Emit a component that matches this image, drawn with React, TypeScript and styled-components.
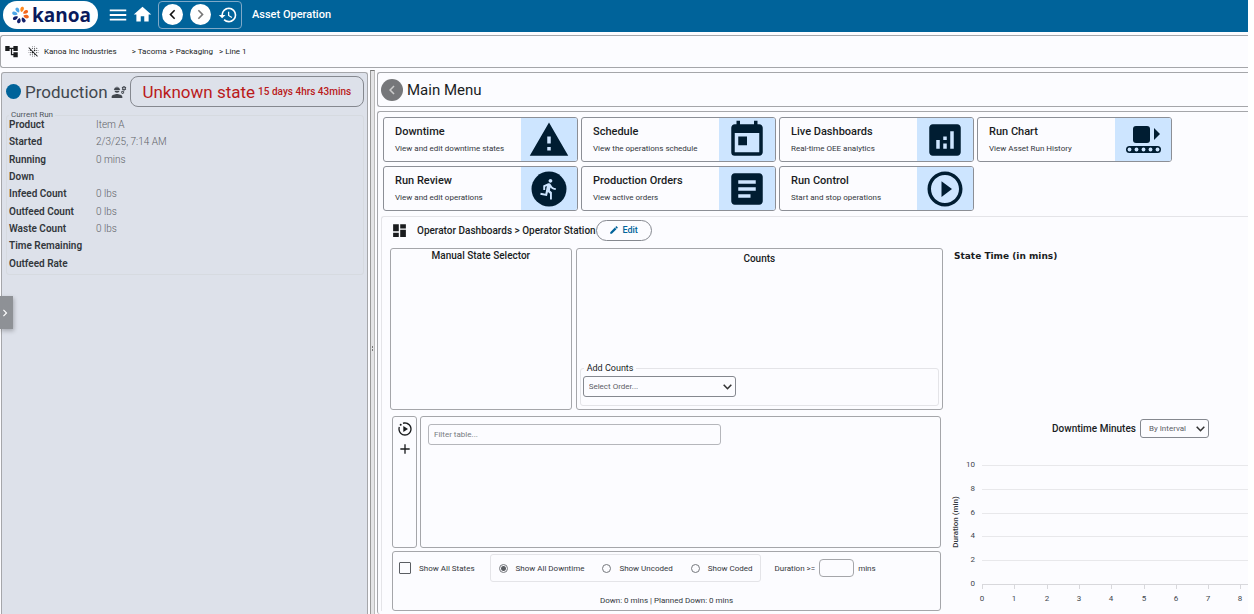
import React from "react";
import styled, { createGlobalStyle, css } from "styled-components";
import {
  MdAccountTree,
  MdAdd,
  MdAnalytics,
  MdArticle,
  MdBlurOff,
  MdChevronLeft,
  MdChevronRight,
  MdDashboard,
  MdEdit,
  MdEngineering,
  MdHistory,
  MdHome,
  MdMenu,
  MdPlayCircleOutline,
  MdToday,
  MdWarning,
} from "react-icons/md";

const color = {
  primary: "#00639a",
  surface: "#fcfcff",
  side: "#dde1ea",
  line: "#a5a6aa",
  faint: "#e4e4e8",
  ink: "#1a1c1e",
  muted: "#5f6369",
  accent: "#cde5ff",
  deep: "#001d32",
  danger: "#ba1a1a",
};

const GlobalStyle = createGlobalStyle`
  *, *::before, *::after { box-sizing: border-box; }
  html, body, #root { height: 100%; }
  body {
    margin: 0;
    background: #fff;
    color: ${color.ink};
    font-family: Roboto, "Liberation Sans", sans-serif;
    font-size: 8px;
    overflow: hidden;
  }
  button, input, select { font: inherit; color: inherit; }
  h1, h2, p { margin: 0; }
  svg { display: block; flex: none; }
`;

const Page = styled.div`
  display: flex;
  flex-direction: column;
  height: 100vh;
  margin-right: 6px;
  background: ${color.surface};
  overflow: hidden;
`;

const TopBar = styled.header`
  display: flex;
  align-items: center;
  flex: none;
  height: 32px;
  padding: 0 3px 3px;
  background: ${color.primary};
  color: #fff;
`;

const Brand = styled.a`
  display: flex;
  align-items: center;
  gap: 1px;
  width: 95px;
  height: 28px;
  padding-left: 7px;
  margin-right: 9px;
  border-radius: 14px;
  background: #fff;
  color: #0a1a5c;
  font: 700 19px/24px "Open Sans", sans-serif;
  text-decoration: none;
`;

const PlainButton = styled.button`
  display: flex;
  align-items: center;
  justify-content: center;
  padding: 0;
  border: 0;
  background: none;
  cursor: pointer;
`;

const BarButton = styled(PlainButton)`
  width: 22px;
  height: 22px;
  margin-right: 2px;
  color: #fff;
`;

const HistoryGroup = styled.div`
  display: flex;
  align-items: center;
  gap: 7px;
  height: 28px;
  padding: 0 3px;
  margin: 0 10px 0 3px;
  border: 1px solid #7fa9c8;
  border-radius: 4px;
`;

const RoundButton = styled(PlainButton)<{ $dim?: boolean }>`
  width: 21px;
  height: 21px;
  border-radius: 50%;
  background: #fff;
  color: ${(p) => (p.$dim ? "#777" : "#111")};
`;

const BarTitle = styled.h1`
  font-size: 11px;
  font-weight: 500;
`;

const Panel = styled.div`
  border: 1px solid ${color.line};
  border-radius: 3px;
`;

const Crumbs = styled.nav`
  display: flex;
  align-items: center;
  flex: none;
  height: 33px;
  margin-top: 3px;
  padding-left: 3px;
  border: 1px solid ${color.line};
  border-right: 0;
  border-radius: 3px 0 0 3px;
  a { color: inherit; text-decoration: none; }
`;

const CrumbIcons = styled.span`
  display: flex;
  align-items: center;
  gap: 8px;
  margin-right: 4px;
`;

const CrumbPath = styled.span`
  display: flex;
  gap: 3px;
  margin: 0 6px 0 15px;
`;

const Body = styled.div`
  display: flex;
  flex: 1;
  min-height: 0;
  padding-top: 4px;
`;

const Sidebar = styled.aside`
  position: relative;
  flex: 0 0 367px;
  margin-left: 1px;
  padding: 3px 3px 0 4px;
  border: 1px solid ${color.line};
  border-bottom: 0;
  border-radius: 3px 3px 0 0;
  background: ${color.side};
`;

const Splitter = styled.div`
  display: flex;
  align-items: center;
  flex: 0 0 5px;
  margin: -2px 2px 0;
  border-top: 1px solid #777;
  border-right: 1px solid #bbb;
  border-left: 1px solid #999;
  background: #e4e4e6;
`;

const Grip = styled.span`
  width: 1px;
  height: 5px;
  margin: 11px 0 0 1px;
  border-top: 2px solid #777;
  border-bottom: 2px solid #777;
`;

const Content = styled.main`
  display: flex;
  flex-direction: column;
  flex: 1;
  min-width: 0;
  gap: 4px;
`;

const StateRow = styled.div`
  display: flex;
  align-items: center;
  height: 31px;
`;

const Dot = styled.span`
  width: 15px;
  height: 15px;
  margin-right: 4px;
  border-radius: 50%;
  background: ${color.primary};
`;

const StateName = styled.h2`
  margin-right: 3px;
  color: #42474e;
  font-size: 17px;
  font-weight: 400;
`;

const StateBox = styled.div`
  display: flex;
  align-items: center;
  justify-content: center;
  flex: 1;
  gap: 3px;
  height: 31px;
  margin-left: 3px;
  border: 1px solid #85888f;
  border-radius: 8px;
  color: ${color.danger};
  font-size: 17px;
  small { font-size: 10px; font-weight: 500; }
`;

const RunSet = styled.fieldset`
  margin: 3px 0 0;
  padding: 0 0 2px 2px;
  border: 1px solid #d6dae0;
  border-radius: 3px;
  legend {
    height: 10px;
    padding: 0 2px;
    color: #50555c;
    font-size: 8px;
    line-height: 10px;
  }
`;

const RunTable = styled.table`
  height: 156px;
  margin-top: -4px;
  border-collapse: collapse;
  font-size: 10px;
  line-height: 15px;
  th {
    width: 87px;
    padding: 0;
    color: #33373c;
    font-weight: 600;
    text-align: left;
  }
  td { padding: 0; color: ${color.muted}; font-weight: 300; }
`;

const Drawer = styled(PlainButton)`
  position: absolute;
  top: 223px;
  left: -2px;
  width: 13px;
  height: 33px;
  padding-right: 3px;
  background: #8e9196;
  box-shadow: 1px 2px 4px rgba(0, 0, 0, 0.25);
  color: #fff;
`;

const openRight = css`
  border-right: 0;
  border-top-right-radius: 0;
  border-bottom-right-radius: 0;
`;

const TitleBar = styled(Panel)`
  ${openRight}
  display: flex;
  align-items: center;
  flex: none;
  gap: 4px;
  height: 35px;
  padding-left: 3px;
  font-size: 15px;
`;

const BackButton = styled(PlainButton)`
  width: 22px;
  height: 22px;
  border-radius: 50%;
  background: #76777a;
  color: #ccc;
`;

const Workspace = styled(Panel)`
  ${openRight}
  flex: 1;
  min-height: 0;
  padding: 5px 0 0 3px;
  border-bottom: 0;
`;

const Cards = styled.div`
  display: flex;
  flex-wrap: wrap;
  gap: 4px 3px;
  padding: 0 2px;
`;

const Card = styled.a`
  display: flex;
  width: 195px;
  height: 45px;
  overflow: hidden;
  border: 1px solid #8c8f96;
  border-radius: 3px;
  color: inherit;
  text-decoration: none;
`;

const CardText = styled.div`
  flex: 1;
  padding: 7px 0 0 11px;
  line-height: 14px;
  white-space: nowrap;
  color: #33373c;
  strong {
    display: block;
    margin-bottom: 3px;
    color: ${color.ink};
    font-size: 11px;
    font-weight: 500;
  }
`;

const CardIcon = styled.div`
  display: flex;
  align-items: center;
  justify-content: center;
  flex: 0 0 56px;
  background: ${color.accent};
  color: ${color.deep};
`;

const Dashboard = styled.section`
  margin-top: 5px;
  padding: 2px 0 0 8px;
  border: 1px solid ${color.faint};
  border-width: 1px 0 0 1px;
  border-radius: 3px 0 0 0;
`;

const DashHead = styled.div`
  display: flex;
  align-items: center;
  height: 22px;
  padding-left: 1px;
  font-size: 10px;
  font-weight: 500;
  span { margin-left: 9px; }
`;

const EditButton = styled(PlainButton)`
  gap: 3px;
  width: 56px;
  height: 21px;
  border: 1px solid #85888f;
  border-radius: 11px;
  color: ${color.primary};
  font-size: 9px;
  font-weight: 500;
`;

const Split = styled.div`
  display: flex;
  gap: 8px;
  margin-top: 7px;
`;

const LeftPane = styled.div`
  flex: 1;
  min-width: 0;
`;

const RightPane = styled.div`
  display: flex;
  flex-direction: column;
  flex: 0 0 297px;
  min-width: 0;
`;

const TopRow = styled.div`
  display: flex;
  gap: 4px;
  height: 162px;
`;

const Selector = styled(Panel)`
  flex: 1;
`;

const Counts = styled(Panel)`
  display: flex;
  flex-direction: column;
  justify-content: space-between;
  flex: 2;
  padding: 3px;
`;

const PaneTitle = styled.h2`
  font-size: 10px;
  font-weight: 500;
  line-height: 13px;
  text-align: center;
`;

const AddCounts = styled.fieldset`
  margin: 0;
  padding: 2px 0 8px 2px;
  border: 1px solid ${color.faint};
  border-radius: 3px;
  legend { margin-left: 1px; padding: 0 3px; font-size: 9px; line-height: 11px; }
`;

const SelectWrap = styled.div<{ $width: number; $height: number }>`
  position: relative;
  width: ${(p) => p.$width}px;
  height: ${(p) => p.$height}px;
  svg { position: absolute; top: 50%; right: 4px; margin-top: -3px; pointer-events: none; }
`;

const Select = styled.select<{ $indent: number }>`
  width: 100%;
  height: 100%;
  padding: 0 0 0 ${(p) => p.$indent}px;
  appearance: none;
  border: 1px solid #85888f;
  border-radius: 3px;
  background: transparent;
  color: #5c6066;
`;

const LowerArea = styled.div`
  display: flex;
  flex-direction: column;
  gap: 3px;
  padding: 6px 2px 0;
`;

const TableRow = styled.div`
  display: flex;
  gap: 3px;
  height: 132px;
`;

const ToolStrip = styled(Panel)`
  display: flex;
  flex-direction: column;
  align-items: center;
  gap: 4px;
  flex: 0 0 25px;
  padding-top: 4px;
`;

const TablePane = styled(Panel)`
  flex: 1;
  padding: 7px;
`;

const FilterInput = styled.input`
  display: block;
  width: 293px;
  max-width: 100%;
  height: 21px;
  padding: 0 5px;
  border: 1px solid #b5b6bb;
  border-radius: 3px;
  background: transparent;
  &::placeholder { color: #777b81; opacity: 1; }
`;

const Options = styled(Panel)`
  height: 60px;
  padding: 2px 6px 0;
  color: #33373c;
`;

const OptionRow = styled.div`
  display: flex;
  align-items: center;
  height: 28px;
  white-space: nowrap;
`;

const OptionLabel = styled.label`
  display: flex;
  align-items: center;
  gap: 8px;
`;

const CheckBox = styled.input`
  width: 12px;
  height: 12px;
  margin: 0;
  appearance: none;
  border: 1px solid #5b5e63;
  border-radius: 1px;
  &:checked { background: ${color.primary}; }
`;

const RadioGroup = styled.div`
  display: flex;
  align-items: center;
  gap: 18px;
  height: 28px;
  margin: 0 13px 0 15px;
  padding: 0 8px;
  border: 1px solid ${color.faint};
  border-radius: 3px;
`;

const Radio = styled.input`
  width: 9px;
  height: 9px;
  margin: 0;
  appearance: none;
  border: 1px solid #75787d;
  border-radius: 50%;
  &:checked { background: radial-gradient(circle, #5b5e63 0 2px, transparent 3px); }
`;

const DurationLabel = styled(OptionLabel)`
  gap: 4px;
`;

const DurationInput = styled.input`
  width: 35px;
  height: 18px;
  border: 1px solid ${color.line};
  border-radius: 4px;
  background: transparent;
`;

const Totals = styled.p`
  margin-top: 12px;
  line-height: 14px;
  text-align: center;
`;

const StateTime = styled.h2`
  height: 171px;
  padding: 2px 0 0 3px;
  font: 700 9px/13px "DejaVu Sans", sans-serif;
`;

const ChartHead = styled.div`
  display: flex;
  align-items: center;
  justify-content: center;
  gap: 4px;
  height: 19px;
  padding-left: 64px;
  margin-right: 2px;
`;

const Chart = styled.svg`
  width: 100%;
  height: 172px;
  font-family: Roboto, sans-serif;
  overflow: hidden;
`;

function Flower() {
  const petals = ["#ff8a1f", "#f3641c", "#f3641c", "#13206b", "#13206b", "#13206b", "#4da6e8", "#4da6e8"];
  return (
    <svg width="21" height="20" viewBox="-12 -12 24 24" aria-hidden="true">
      {petals.map((fill, i) => (
        <path
          key={i}
          d="M0 -3.6 C-1.8 -5 -2.3 -6.8 -2 -8.6 C-1.4 -10.8 1.4 -10.8 2 -8.6 C2.3 -6.8 1.8 -5 0 -3.6Z"
          fill={fill}
          transform={`rotate(${i * 45 + 15})`}
        />
      ))}
    </svg>
  );
}

function Caret() {
  return (
    <svg width="9" height="6" viewBox="0 0 9 6" fill="none" stroke="#333" strokeWidth="1.6" aria-hidden="true">
      <path d="M.7 .8 4.5 4.7 8.3 .8" />
    </svg>
  );
}

function MotionPlayIcon() {
  return (
    <svg width="16" height="16" viewBox="0 0 24 24" fill="currentColor" aria-hidden="true">
      <path d="M9.5 16.5l7-4.5-7-4.5z" />
      <path d="M22 12c0 5.52-4.48 10-10 10S2 17.52 2 12c0-1.19.22-2.32.6-3.38l1.88.68C4.17 10.14 4 11.05 4 12c0 4.41 3.59 8 8 8s8-3.59 8-8-3.59-8-8-8c-.95 0-1.85.17-2.69.48l-.68-1.89C9.69 2.22 10.82 2 12 2c5.52 0 10 4.48 10 10z" />
      <circle cx="5.5" cy="5.5" r="1.5" />
    </svg>
  );
}

function RunnerIcon() {
  return (
    <svg width="36" height="36" viewBox="0 0 36 36" aria-hidden="true">
      <circle cx="18" cy="18" r="17.5" fill={color.deep} />
      <path
        transform="translate(6.5 6.5) scale(.96)"
        fill={color.accent}
        d="M13.49 5.48c1.1 0 2-.9 2-2s-.9-2-2-2-2 .9-2 2 .9 2 2 2zm-3.6 13.9l1-4.4 2.1 2v6h2v-7.5l-2.1-2 .6-3c1.3 1.5 3.3 2.5 5.5 2.5v-2c-1.9 0-3.5-1-4.3-2.4l-1-1.6c-.4-.6-1-1-1.7-1-.3 0-.5.1-.8.1l-5.2 2.2v4.7h2v-3.4l1.8-.7-1.6 8.1-4.9-1-.4 2 7 1.4z"
      />
    </svg>
  );
}

function ConveyorIcon() {
  return (
    <svg width="36" height="30" viewBox="0 0 36 30" fill={color.deep} aria-hidden="true">
      <rect x="8" y="1" width="17" height="17" rx="3" />
      <path d="M29 3v12l6-6z" />
      <rect x="1" y="21" width="35" height="7" rx="3.5" />
      {[4.5, 11.5, 18.5, 25.5, 32.5].map((x) => (
        <circle key={x} cx={x} cy="24.5" r="1.9" fill={color.accent} />
      ))}
    </svg>
  );
}

const cards = [
  { title: "Downtime", text: "View and edit downtime states", icon: <MdWarning size={42} /> },
  { title: "Schedule", text: "View the operations schedule", icon: <MdToday size={42} /> },
  { title: "Live Dashboards", text: "Real-time OEE analytics", icon: <MdAnalytics size={42} /> },
  { title: "Run Chart", text: "View Asset Run History", icon: <ConveyorIcon /> },
  { title: "Run Review", text: "View and edit operations", icon: <RunnerIcon /> },
  { title: "Production Orders", text: "View active orders", icon: <MdArticle size={42} /> },
  { title: "Run Control", text: "Start and stop operations", icon: <MdPlayCircleOutline size={42} /> },
];

const runRows = [
  ["Product", "Item A"],
  ["Started", "2/3/25, 7:14 AM"],
  ["Running", "0 mins"],
  ["Down", ""],
  ["Infeed Count", "0 lbs"],
  ["Outfeed Count", "0 lbs"],
  ["Waste Count", "0 lbs"],
  ["Time Remaining", ""],
  ["Outfeed Rate", ""],
];

function DowntimeChart() {
  return (
    <Chart role="img" aria-label="Downtime minutes by interval">
      {[10, 8, 6, 4, 2, 0].map((v, i) => {
        const y = 27 + i * 24 - (i > 2 ? 1 : 0);
        return (
          <g key={v}>
            <line x1="31" x2="100%" y1={y + 0.5} y2={y + 0.5} stroke={v === 0 ? "#d8d8dc" : "#e8e8eb"} />
            <text x="24" y={y + 2} textAnchor="end" fontSize="8" fill="#42474e">{v}</text>
          </g>
        );
      })}
      {[0, 1, 2, 3, 4, 5, 6, 7, 8].map((v) => {
        const x = 31 + Math.round(v * 32.3);
        return (
          <g key={v}>
            <line x1={x + 0.5} x2={x + 0.5} y1="146" y2="151" stroke="#d8d8dc" />
            <text x={x} y="163" textAnchor="middle" fontSize="8" fill="#42474e">{v}</text>
          </g>
        );
      })}
      <text transform="translate(7 84) rotate(-90)" textAnchor="middle" fontSize="8" fontWeight="500" fill="#33373c">
        Duration (min)
      </text>
    </Chart>
  );
}

export default function App() {
  return (
    <>
      <GlobalStyle />
      <Page>
        <TopBar>
          <Brand href="#"><Flower />kanoa</Brand>
          <BarButton aria-label="Menu"><MdMenu size={22} /></BarButton>
          <BarButton aria-label="Home"><MdHome size={21} /></BarButton>
          <HistoryGroup>
            <RoundButton aria-label="Back"><MdChevronLeft size={19} /></RoundButton>
            <RoundButton aria-label="Forward" $dim><MdChevronRight size={19} /></RoundButton>
            <PlainButton aria-label="History"><MdHistory size={20} color="#fff" /></PlainButton>
          </HistoryGroup>
          <BarTitle>Asset Operation</BarTitle>
        </TopBar>

        <Crumbs aria-label="Breadcrumb">
          <CrumbIcons>
            <MdAccountTree size={15} />
            <MdBlurOff size={13} />
          </CrumbIcons>
          <a href="#">Kanoa Inc Industries</a>
          <CrumbPath>
            <a href="#">&gt; Tacoma</a>
            <a href="#">&gt; Packaging</a>
          </CrumbPath>
          <a href="#">&gt; Line 1</a>
        </Crumbs>

        <Body>
          <Sidebar>
            <StateRow>
              <Dot />
              <StateName>Production</StateName>
              <MdEngineering size={16} color="#42474e" />
              <StateBox>Unknown state <small>15 days 4hrs 43mins</small></StateBox>
            </StateRow>
            <RunSet>
              <legend>Current Run</legend>
              <RunTable>
                <tbody>
                  {runRows.map(([name, value]) => (
                    <tr key={name}>
                      <th scope="row">{name}</th>
                      <td>{value}</td>
                    </tr>
                  ))}
                </tbody>
              </RunTable>
            </RunSet>
            <Drawer aria-label="Open drawer"><MdChevronRight size={14} /></Drawer>
          </Sidebar>
          <Splitter><Grip /></Splitter>

          <Content>
            <TitleBar>
              <BackButton aria-label="Back to menu"><MdChevronLeft size={18} /></BackButton>
              Main Menu
            </TitleBar>
            <Workspace>
              <Cards>
                {cards.map((c) => (
                  <Card key={c.title} href="#">
                    <CardText><strong>{c.title}</strong>{c.text}</CardText>
                    <CardIcon>{c.icon}</CardIcon>
                  </Card>
                ))}
              </Cards>
              <Dashboard>
                <DashHead>
                  <MdDashboard size={17} />
                  <span>Operator Dashboards &gt; Operator Station</span>
                  <EditButton><MdEdit size={10} />Edit</EditButton>
                </DashHead>
                <Split>
                  <LeftPane>
                    <TopRow>
                      <Selector><PaneTitle>Manual State Selector</PaneTitle></Selector>
                      <Counts>
                        <PaneTitle>Counts</PaneTitle>
                        <AddCounts>
                          <legend>Add Counts</legend>
                          <SelectWrap $width={153} $height={21}>
                            <Select $indent={5} aria-label="Order"><option>Select Order...</option></Select>
                            <Caret />
                          </SelectWrap>
                        </AddCounts>
                      </Counts>
                    </TopRow>
                    <LowerArea>
                      <TableRow>
                        <ToolStrip>
                          <PlainButton aria-label="Start"><MotionPlayIcon /></PlainButton>
                          <PlainButton aria-label="Add"><MdAdd size={16} /></PlainButton>
                        </ToolStrip>
                        <TablePane>
                          <FilterInput aria-label="Filter table" placeholder="Filter table..." />
                        </TablePane>
                      </TableRow>
                      <Options>
                        <OptionRow>
                          <OptionLabel><CheckBox type="checkbox" />Show All States</OptionLabel>
                          <RadioGroup role="radiogroup" aria-label="Downtime filter">
                            <OptionLabel><Radio type="radio" name="filter" defaultChecked />Show All Downtime</OptionLabel>
                            <OptionLabel><Radio type="radio" name="filter" />Show Uncoded</OptionLabel>
                            <OptionLabel><Radio type="radio" name="filter" />Show Coded</OptionLabel>
                          </RadioGroup>
                          <DurationLabel>Duration &gt;= <DurationInput type="text" /> mins</DurationLabel>
                        </OptionRow>
                        <Totals>Down: 0 mins | Planned Down: 0 mins</Totals>
                      </Options>
                    </LowerArea>
                  </LeftPane>
                  <RightPane>
                    <StateTime>State Time (in mins)</StateTime>
                    <ChartHead>
                      <PaneTitle>Downtime Minutes</PaneTitle>
                      <SelectWrap $width={69} $height={19}>
                        <Select $indent={8} aria-label="Grouping"><option>By Interval</option></Select>
                        <Caret />
                      </SelectWrap>
                    </ChartHead>
                    <DowntimeChart />
                  </RightPane>
                </Split>
              </Dashboard>
            </Workspace>
          </Content>
        </Body>
      </Page>
    </>
  );
}
